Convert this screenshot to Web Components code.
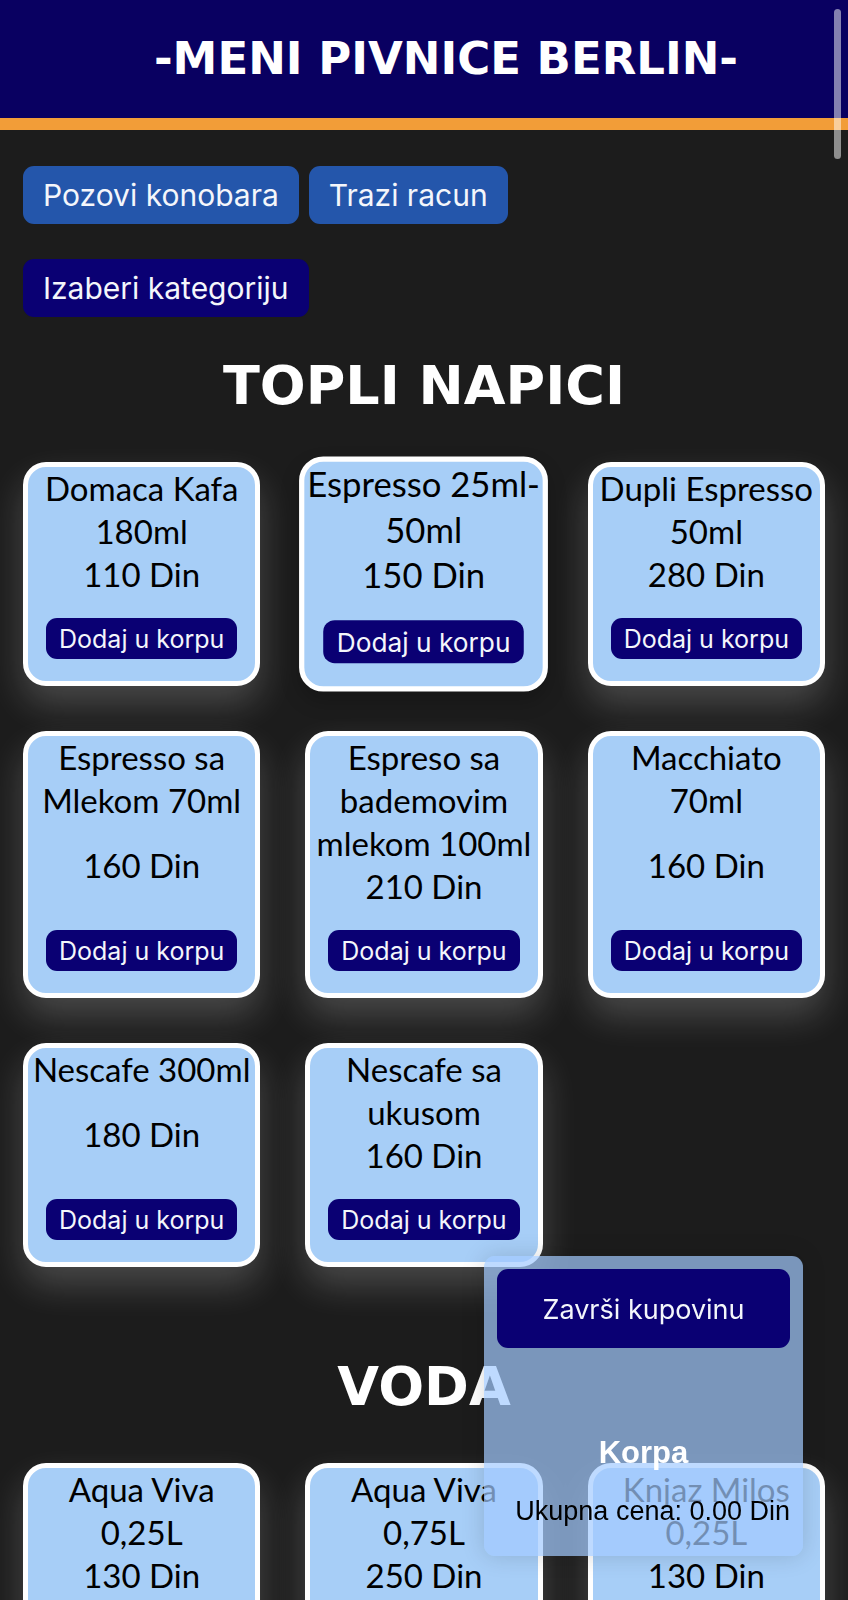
<!DOCTYPE html>
<html lang="sr-Latn">
<head>
<meta charset="utf-8">
<meta name="viewport" content="width=device-width, initial-scale=1">
<title>Meni pivnice Berlin</title>
<style>
  body { margin: 0; background: #1c1c1c; }
</style>
</head>
<body>
<menu-page>
  <menu-header slot="header">-MENI PIVNICE BERLIN-</menu-header>
  <menu-toolbar>
    <menu-button tone="blue">Pozovi konobara</menu-button>
    <menu-button tone="blue">Trazi racun</menu-button>
    <menu-button slot="category">Izaberi kategoriju</menu-button>
  </menu-toolbar>
  <menu-section heading="TOPLI NAPICI">
    <menu-item price="110">Domaca Kafa 180ml</menu-item>
    <menu-item price="150" active>Espresso 25ml-50ml</menu-item>
    <menu-item price="280">Dupli Espresso 50ml</menu-item>
    <menu-item price="160">Espresso sa Mlekom 70ml</menu-item>
    <menu-item price="210">Espreso sa bademovim mlekom 100ml</menu-item>
    <menu-item price="160">Macchiato 70ml</menu-item>
    <menu-item price="180">Nescafe 300ml</menu-item>
    <menu-item price="160">Nescafe sa ukusom</menu-item>
  </menu-section>
  <menu-section heading="VODA">
    <menu-item price="130">Aqua Viva 0,25L</menu-item>
    <menu-item price="250">Aqua Viva 0,75L</menu-item>
    <menu-item price="130">Knjaz Milos 0,25L</menu-item>
  </menu-section>
</menu-page>
<menu-cart total="0.00"></menu-cart>
<scroll-thumb></scroll-thumb>

<script>
const define = (name, html, setup) => {
  const template = document.createElement('template');
  template.innerHTML = html;
  customElements.define(name, class extends HTMLElement {
    constructor() {
      super();
      this.attachShadow({ mode: 'open' }).append(template.content.cloneNode(true));
    }
    connectedCallback() {
      if (setup) setup(this, this.shadowRoot);
    }
  });
};

define('menu-page', `
  <style>
    :host { display: block; height: 100vh; overflow-y: auto; scrollbar-width: none; background: #1c1c1c; }
    main { padding: 36px 23px 0; }
  </style>
  <slot name="header"></slot>
  <main><slot></slot></main>`);

define('menu-header', `
  <style>
    :host { display: block; background: #090061; border-bottom: 12px solid #f29d38; }
    h1 { margin: 0; padding: 35px 0 35px 44px; text-align: center; color: #fff;
         font: 700 45px/48px "DejaVu Sans", sans-serif; }
  </style>
  <header><h1><slot></slot></h1></header>`);

define('menu-toolbar', `
  <style>
    :host { display: grid; gap: 35px; }
    div { display: flex; flex-wrap: wrap; gap: 10px; }
  </style>
  <div><slot></slot></div>
  <div><slot name="category"></slot></div>`);

define('menu-button', `
  <style>
    :host { display: block; }
    button { display: block; margin: 0; border: 0; border-radius: 11px; padding: 11px 20px;
             background: #0a0073; color: #f4f6fb; font: 400 30px/36px Inter, sans-serif; }
    :host([tone="blue"]) button { background: #2456ab; }
  </style>
  <button type="button"><slot></slot></button>`);

define('menu-section', `
  <style>
    :host { display: block; padding: 41px 0 51px; }
    h2 { margin: 0 0 48px; text-align: center; color: #fff; font: 700 54px/56px "DejaVu Sans", sans-serif; }
    div { display: grid; grid-template-columns: repeat(3, minmax(0, 1fr)); gap: 45px; }
  </style>
  <section>
    <h2></h2>
    <div><slot></slot></div>
  </section>`,
  (host, root) => { root.querySelector('h2').textContent = host.getAttribute('heading'); });

define('menu-item', `
  <style>
    :host { display: flex; flex-direction: column; align-items: center; box-sizing: border-box;
            border: 5px solid #fff; border-radius: 23px; padding-bottom: 22px; background: #a7cef7;
            box-shadow: 0 18px 36px rgba(255, 255, 255, .2);
            color: #000; font: 400 33px/43px Lato, sans-serif; text-align: center; }
    :host([active]) { transform: scale(1.05); box-shadow: 0 9px 18px rgba(0, 0, 0, .2); }
    h3, p { margin: 0; font: inherit; }
    h3 { padding: 0 2px; }
    p { flex: 1; display: flex; align-items: center; margin-bottom: 22px; }
    button { border: 0; border-radius: 11px; padding: 6px 13px 4px; background: #0a0073; color: #f4f6fb;
             font: 400 25px/31px Inter, sans-serif; white-space: nowrap; }
  </style>
  <h3><slot></slot></h3>
  <p></p>
  <button type="button">Dodaj u korpu</button>`,
  (host, root) => { root.querySelector('p').textContent = host.getAttribute('price') + ' Din'; });

define('menu-cart', `
  <style>
    :host { display: flex; flex-direction: column; position: fixed; right: 45px; bottom: 44px; z-index: 2;
            box-sizing: border-box; width: 319px; padding: 13px 13px 29px; border-radius: 11px;
            background: rgba(163, 202, 255, .7); box-shadow: 0 0 23px rgba(0, 0, 0, .15);
            font-family: "Liberation Sans", sans-serif; }
    button { border: 0; border-radius: 11px; padding: 25px 0 22px; background: #0a0073; color: #f4f6fb;
             font: 400 27px/32px Inter, sans-serif; }
    h2 { margin: 87px 0 24px; text-align: center; color: #fff; font-size: 31px; line-height: 36px; }
    p { margin: 0; text-align: right; color: #000; font-size: 27px; line-height: 32px; white-space: nowrap; }
  </style>
  <button type="button">Završi kupovinu</button>
  <h2>Korpa</h2>
  <p></p>`,
  (host, root) => { root.querySelector('p').textContent = 'Ukupna cena: ' + host.getAttribute('total') + ' Din'; });

define('scroll-thumb', `
  <style>
    :host { display: block; position: fixed; top: 9px; right: 7px; z-index: 3; width: 7px; height: 150px;
            border-radius: 4px; background: rgba(255, 255, 255, .5); pointer-events: none; }
  </style>`);
</script>
</body>
</html>
